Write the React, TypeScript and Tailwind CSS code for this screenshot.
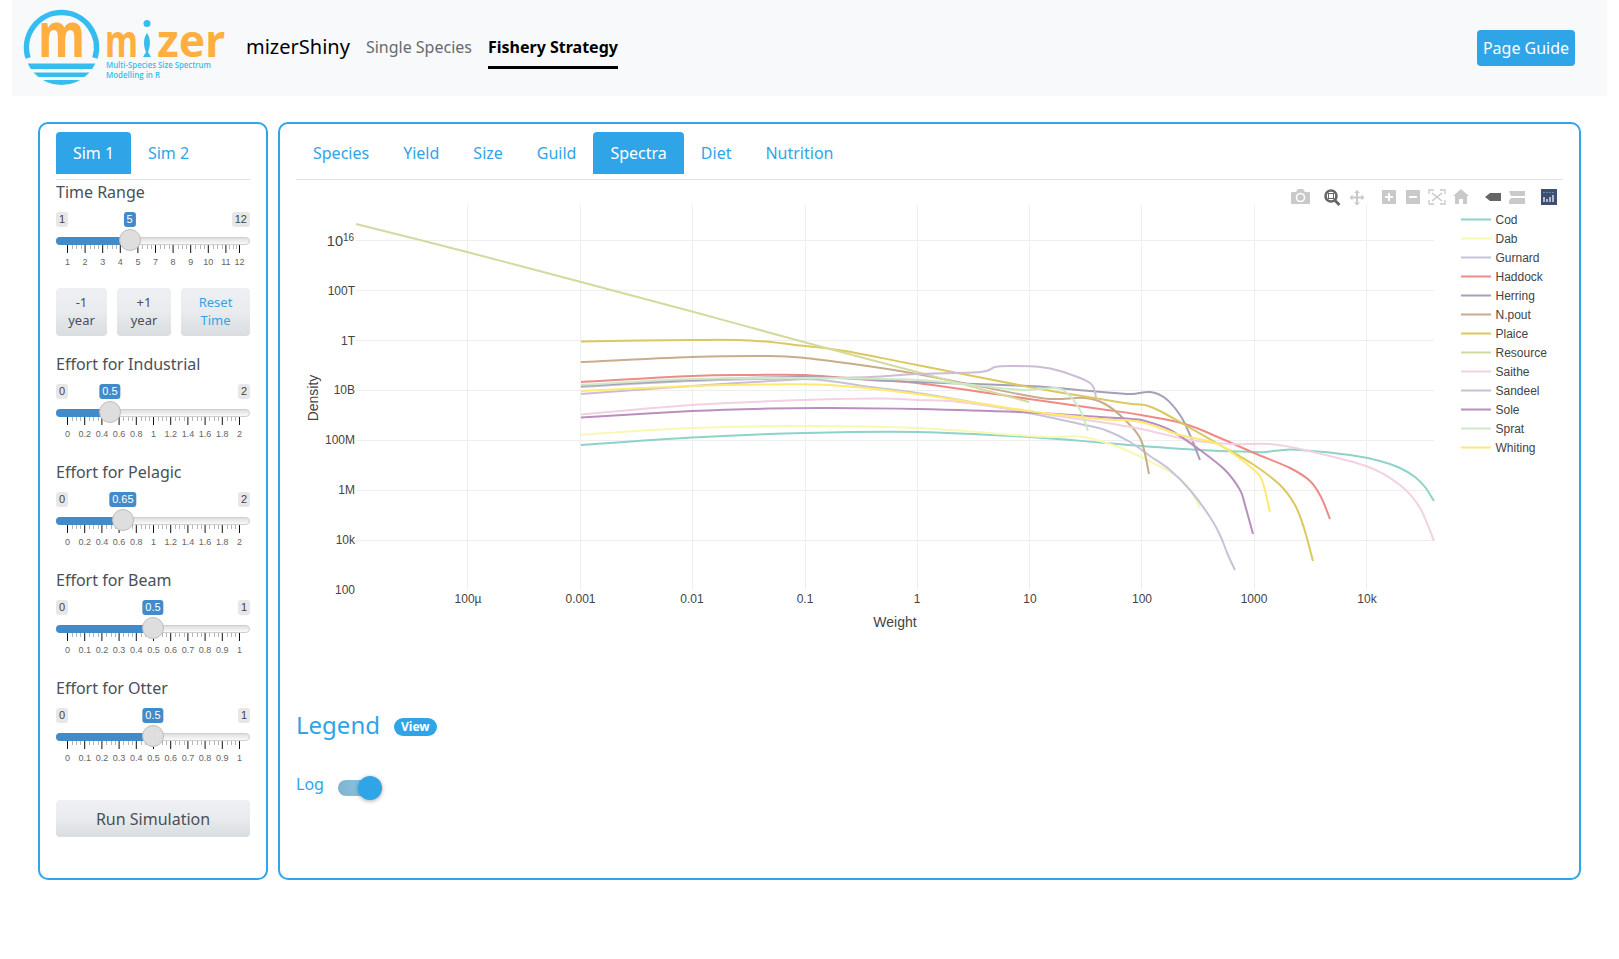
import React from "react";

type Point = [number, number];
type Series = { name: string; color: string; points: Point[] };

const series: Series[] = [
  { name: "Cod", color: "#8dd3c7", points: [[581,445],[692,437.5],[805,433],[917,432],[1029,437],[1100,442.5],[1141,446],[1200,450],[1254,452],[1265,452],[1283,450],[1300,450],[1350,455],[1380,461],[1400,468],[1415,477],[1425,487],[1434,501]] },
  { name: "Dab", color: "#f8f8b4", points: [[581,434.5],[692,428],[805,426],[917,428],[1029,436],[1060,437],[1080,436.5],[1110,444],[1141,457],[1175,475],[1190,490],[1200,508]] },
  { name: "Gurnard", color: "#c6c3d8", points: [[581,387],[692,381],[805,379],[870,387],[917,393],[960,400],[1029,413],[1080,424],[1105,430],[1130,442],[1150,456],[1170,470],[1190,490],[1210,517],[1220,535],[1228,555],[1235,570]] },
  { name: "Haddock", color: "#ee8b87", points: [[581,382],[692,376],[750,375],[805,375],[870,380],[917,383],[1029,399],[1100,409],[1141,415],[1185,424],[1220,438],[1254,453],[1290,468],[1310,481],[1321,497],[1330,519]] },
  { name: "Herring", color: "#a6a0b6", points: [[581,386],[692,380],[805,377],[917,382],[1029,386],[1090,391],[1115,393],[1132,394],[1150,392],[1165,398],[1180,415],[1190,435],[1200,460]] },
  { name: "N.pout", color: "#c8ad8c", points: [[581,362],[692,357],[770,356],[805,358],[860,365],[917,374],[1029,396],[1055,399],[1085,398],[1105,404],[1125,420],[1141,440],[1149,474]] },
  { name: "Plaice", color: "#dbc85f", points: [[581,341.5],[692,340],[750,340.5],[805,346],[845,351],[917,365],[1029,387],[1100,399],[1132,404],[1145,405],[1160,411],[1185,425],[1220,445],[1254,465],[1280,485],[1295,505],[1304,528],[1313,561]] },
  { name: "Resource", color: "#d2da9e", points: [[356,224],[467,252],[581,282],[692,311.5],[800,341],[917,372],[1029,402]] },
  { name: "Saithe", color: "#f3d0e2", points: [[581,414.5],[692,405],[805,400],[880,398.5],[917,400],[960,402],[1029,412],[1100,422],[1141,429],[1190,440],[1230,444],[1270,444],[1300,449],[1366,466],[1400,485],[1420,508],[1434,541]] },
  { name: "Sandeel", color: "#cdbcd5", points: [[581,394],[692,386],[805,379],[870,377],[917,374],[980,372],[995,367],[1010,366],[1040,367],[1060,371],[1090,383],[1096,397]] },
  { name: "Sole", color: "#b88fbf", points: [[581,417.5],[692,411],[770,408.5],[830,408],[917,409],[1029,412.5],[1100,417],[1132,419],[1145,421],[1170,430],[1200,450],[1225,470],[1240,490],[1245,505],[1253,534]] },
  { name: "Sprat", color: "#cdeac6", points: [[581,385],[692,379],[805,378],[917,380],[1000,388],[1029,390],[1055,388],[1067,393],[1080,410],[1088,431]] },
  { name: "Whiting", color: "#ffe96f", points: [[581,391],[692,386],[770,384.5],[830,385],[917,394],[1029,411],[1100,419],[1141,422],[1180,435],[1215,443],[1235,455],[1254,470],[1262,480],[1270,512]] },
];

// [grid x, label x, label]
const xTicks: [number, number, string][] = [
  [467, 468, "100µ"], [580, 580.5, "0.001"], [692, 692, "0.01"], [805, 805, "0.1"], [917, 917, "1"],
  [1029, 1030, "10"], [1141, 1142, "100"], [1254, 1254, "1000"], [1366, 1367, "10k"],
];
// [grid y, label baseline, label]
const yTicks: [number, number, string][] = [
  [290, 295, "100T"], [340, 345, "1T"], [390, 394, "10B"], [440, 444, "100M"],
  [490, 494, "1M"], [540, 544, "10k"], [590, 594, "100"],
];

// catmull-rom through the sampled points
function toPath(pts: Point[]) {
  let d = `M${pts[0][0]} ${pts[0][1]}`;
  for (let i = 0; i < pts.length - 1; i++) {
    const p0 = pts[Math.max(i - 1, 0)];
    const p1 = pts[i];
    const p2 = pts[i + 1];
    const p3 = pts[Math.min(i + 2, pts.length - 1)];
    const c1x = p1[0] + (p2[0] - p0[0]) / 6;
    const c1y = p1[1] + (p2[1] - p0[1]) / 6;
    const c2x = p2[0] - (p3[0] - p1[0]) / 6;
    const c2y = p2[1] - (p3[1] - p1[1]) / 6;
    d += ` C${c1x} ${c1y} ${c2x} ${c2y} ${p2[0]} ${p2[1]}`;
  }
  return d;
}

function Logo() {
  return (
    <svg width="228" height="96" viewBox="12 0 228 96" className="shrink-0">
      <defs>
        <clipPath id="logo-clip">
          <circle cx="61.5" cy="47.5" r="37.5" />
        </clipPath>
      </defs>
      <path d="M28.1 58 A35 35 0 1 1 94.9 58" fill="none" stroke="#36bdf0" strokeWidth="5.5" />
      <g clipPath="url(#logo-clip)" fill="#36bdf0">
        <rect x="20" y="63.5" width="84" height="5.5" />
        <rect x="20" y="72.5" width="84" height="4.5" />
        <rect x="20" y="80" width="84" height="6" />
      </g>
      <g fill="#ffaf40" fontFamily="'Noto Sans', sans-serif" fontWeight="700">
        <text x="38" y="57" fontSize="62" textLength="47" lengthAdjust="spacingAndGlyphs">m</text>
        <text x="105" y="57" fontSize="44" textLength="33" lengthAdjust="spacingAndGlyphs">m</text>
        <text x="157" y="57" fontSize="44" textLength="68" lengthAdjust="spacingAndGlyphs">zer</text>
      </g>
      <circle cx="147" cy="23.5" r="3.5" fill="#36bdf0" />
      <path d="M147 33C150.5 38 151 45 148 52L151 57H143L146 52C143 45 143.5 38 147 33Z" fill="#36bdf0" />
      <g fill="#36bdf0" fontFamily="'Open Sans', sans-serif" fontSize="8.5" fontWeight="600">
        <text x="106" y="67.5" textLength="105" lengthAdjust="spacingAndGlyphs">Multi-Species Size Spectrum</text>
        <text x="106" y="78" textLength="54" lengthAdjust="spacingAndGlyphs">Modelling in R</text>
      </g>
    </svg>
  );
}

function Slider({
  min,
  max,
  value,
  pct,
  ticks,
  step = 17.2,
}: {
  min: string;
  max: string;
  value: string;
  pct: number;
  ticks: string[];
  step?: number;
}) {
  const center = 11 + 172 * pct;
  return (
    <div className="relative h-[63px] w-[194px]">
      <div className="flex justify-between text-[11px] leading-[15px] font-['Liberation_Sans',sans-serif] text-[#444]">
        <span className="rounded-[3px] bg-[#e7e7e7] px-[3px]">{min}</span>
        <span className="rounded-[3px] bg-[#e7e7e7] px-[3px]">{max}</span>
      </div>
      <span
        className="absolute top-0 -translate-x-1/2 rounded-[3px] bg-[#428bca] px-[3px] text-[11px] leading-[15px] text-white font-['Liberation_Sans',sans-serif]"
        style={{ left: center }}
      >
        {value}
      </span>
      <div className="relative mt-[10px] h-2 rounded-full border border-[#cfcfcf] bg-linear-to-b from-[#dedede] to-[#fbfbfb]">
        <div
          className="absolute -top-px -left-px h-2 rounded-l-full bg-[#428bca]"
          style={{ width: center }}
        />
        <div
          className="absolute top-[-9px] h-[22px] w-[22px] -translate-x-1/2 rounded-full border border-[#bdbdbd] bg-[#dedede]"
          style={{ left: center - 1 }}
        />
      </div>
      <svg width="194" height="26" className="block font-['Liberation_Sans',sans-serif]">
        {ticks.map((t, i) => {
          const last = i === ticks.length - 1;
          const x = last ? 183.5 : 11.5 + i * step;
          const next = 11.5 + (i + 1) * step;
          const gap = (Math.min(next, 183.5) - x) / 4;
          return (
            <g key={i}>
              <line x1={x} x2={x} y1="0" y2="8" stroke="#111" />
              {!last &&
                [1, 2, 3].map((m) => (
                  <line key={m} x1={Math.round(x + m * gap) + 0.5} x2={Math.round(x + m * gap) + 0.5} y1="0" y2="4" stroke="#b5b5b5" />
                ))}
              <text x={x} y="20" textAnchor="middle" fontSize="9" fill="#666">
                {t}
              </text>
            </g>
          );
        })}
      </svg>
    </div>
  );
}

const grid2 = ["0", "0.2", "0.4", "0.6", "0.8", "1", "1.2", "1.4", "1.6", "1.8", "2"];
const grid1 = ["0", "0.1", "0.2", "0.3", "0.4", "0.5", "0.6", "0.7", "0.8", "0.9", "1"];
const gridTime = ["1", "2", "3", "4", "5", "7", "8", "9", "10", "11", "12"];

const efforts = [
  { label: "Effort for Industrial", min: "0", max: "2", value: "0.5", pct: 0.25, ticks: grid2 },
  { label: "Effort for Pelagic", min: "0", max: "2", value: "0.65", pct: 0.325, ticks: grid2 },
  { label: "Effort for Beam", min: "0", max: "1", value: "0.5", pct: 0.5, ticks: grid1 },
  { label: "Effort for Otter", min: "0", max: "1", value: "0.5", pct: 0.5, ticks: grid1 },
];

const btn =
  "flex items-center justify-center rounded-[4px] bg-linear-to-b from-[#eef0f3] via-[#e9ebee] to-[#d9dde0] text-[#495057]";

function Modebar() {
  const g = "#c9c9c9";
  return (
    <g>
      {/* camera */}
      <path d="M1292 192h4l2-3h5l2 3h4a1 1 0 0 1 1 1v10a1 1 0 0 1-1 1h-17a1 1 0 0 1-1-1v-10a1 1 0 0 1 1-1z" fill={g} />
      <circle cx="1300.5" cy="197.5" r="4" fill="none" stroke="#fff" strokeWidth="1.6" />
      {/* zoom */}
      <circle cx="1331" cy="196" r="5.5" fill="none" stroke="#666" strokeWidth="2.6" />
      <rect x="1328.5" y="193.5" width="5" height="5" fill="none" stroke="#666" strokeWidth="1" />
      <path d="M1335 200.5l4.500 4.500" stroke="#666" strokeWidth="2.8" />
      {/* pan */}
      <path d="M1357 190l3 3h-2v3.500h3.500v-2l3 3-3 3v-2H1358v4h2l-3 3-3-3h2v-4h-3.500v2l-3-3 3-3v2H1356V193h-2z" fill={g} />
      {/* zoom in / out */}
      <rect x="1382" y="190" width="14" height="14" fill={g} />
      <path d="M1389 193v8M1385 197h8" stroke="#fff" strokeWidth="2" />
      <rect x="1406" y="190" width="14" height="14" fill={g} />
      <path d="M1409 197h8" stroke="#fff" strokeWidth="2" />
      {/* autoscale */}
      <path d="M1429 194v-4h5M1440 190h5v4M1445 200v4h-5M1434 204h-5v-4" fill="none" stroke={g} strokeWidth="1.300" />
      <path d="M1432 193l10 8M1442 193l-10 8" stroke={g} strokeWidth="1.600" />
      {/* home */}
      <path d="M1461 189l8 7h-2v8h-4v-5h-4v5h-4v-8h-2z" fill={g} />
      {/* spike lines */}
      <path d="M1485 197l5-4h11v8h-11z" fill="#666" />
      <path d="M1509 191h16v5h-14zM1511 198h14v6h-16v-3z" fill={g} />
      {/* plotly */}
      <rect x="1541" y="189" width="16" height="16" fill="#3e4e74" />
      <g stroke="#fff" strokeWidth="1.200">
        <path d="M1544 197v5M1547 199v3M1550 197v5M1553 195v7" />
      </g>
      <g fill="#8fd3d5">
        <rect x="1543.500" y="192" width="1" height="1" />
        <rect x="1546.500" y="192" width="1" height="1" />
        <rect x="1549.500" y="192" width="1" height="1" />
        <rect x="1552.500" y="192" width="1" height="1" />
      </g>
    </g>
  );
}

function Chart() {
  return (
    <svg
      width="1270"
      height="460"
      viewBox="296 185 1270 460"
      className="block font-['Liberation_Sans',sans-serif]"
    >
      <Modebar />
      <g stroke="#eeeeee" strokeWidth="1">
        {xTicks.map(([x]) => (
          <line key={x} x1={x + 0.5} x2={x + 0.5} y1="205" y2="590" />
        ))}
        <line x1="356" x2="1434" y1="240.500" y2="240.500" />
        {yTicks.slice(0, 6).map(([y]) => (
          <line key={y} x1="356" x2="1434" y1={y + 0.5} y2={y + 0.5} />
        ))}
      </g>
      {series.map((s) => (
        <path key={s.name} d={toPath(s.points)} fill="none" stroke={s.color} strokeWidth="2" strokeLinejoin="round" />
      ))}
      <g fill="#444" fontSize="12">
        <text x="343" y="246" textAnchor="end" fontSize="14.500">10</text>
        <text x="343" y="241" fontSize="10">16</text>
        {yTicks.map(([y, by, t]) => (
          <text key={y} x="355" y={by} textAnchor="end">{t}</text>
        ))}
        {xTicks.map(([x, lx, t]) => (
          <text key={x} x={lx} y="603" textAnchor="middle">{t}</text>
        ))}
        <text x="895" y="627" textAnchor="middle" fontSize="14">Weight</text>
        <text transform="translate(318 398) rotate(-90)" textAnchor="middle" fontSize="14">Density</text>
        {series.map((s, i) => (
          <g key={s.name}>
            <line x1="1461" x2="1491" y1={219.5 + i * 19} y2={219.5 + i * 19} stroke={s.color} strokeWidth="2" />
            <text x="1495.500" y={224 + i * 19}>{s.name}</text>
          </g>
        ))}
      </g>
    </svg>
  );
}

export default function App() {
  const [tab] = React.useState("Spectra");
  const tabs = ["Species", "Yield", "Size", "Guild", "Spectra", "Diet", "Nutrition"];
  return (
    <div className="min-h-[959px] bg-white font-['Noto_Sans',sans-serif] text-base text-[#495057]">
      {/* navbar */}
      <nav className="mx-3 flex h-24 items-center bg-[#f8f9fa]">
        <Logo />
        <span className="mb-[2px] ml-[6px] text-xl text-black">mizerShiny</span>
        <a className="mb-[2px] ml-[16px] text-base text-[#666b70]">Single Species</a>
        <a className="ml-4 flex h-[42px] items-center border-b-[3px] border-black text-base font-bold text-black">
          Fishery Strategy
        </a>
        <button className="mr-[32px] ml-auto h-[36px] w-[98px] rounded-[4px] bg-[#2fa4e7] text-base text-white">
          Page Guide
        </button>
      </nav>

      <div className="flex gap-[10px] pt-[26px] pl-[38px]">
        {/* sidebar */}
        <aside className="h-[758px] w-[230px] rounded-[10px] border-2 border-[#2fa4e7] px-4 pt-2">
          <div className="flex h-[48px] border-b border-[#dee2e6]">
            <a className="flex h-[42px] w-[75px] items-center justify-center rounded-t-[4px] bg-[#2fa4e7] text-white">Sim 1</a>
            <a className="flex h-[42px] w-[75px] items-center justify-center text-[#2fa4e7]">Sim 2</a>
          </div>
          <div className="h-[24px] leading-[24px]">Time Range</div>
          <div className="mt-[8px]">
            <Slider min="1" max="12" value="5" pct={0.3636} ticks={gridTime} step={17.6} />
          </div>
          <div className="mt-[13px] flex gap-[10px] text-[13px] leading-[18px]">
            <button className={`${btn} h-[48px] w-[51px] pb-[2px]`}>-1<br />year</button>
            <button className={`${btn} h-[48px] w-[54px] pb-[2px]`}>+1<br />year</button>
            <button className={`${btn} h-[48px] w-[69px] pb-[2px] !text-[#2fa4e7]`}>Reset<br />Time</button>
          </div>
          <div className="mt-[16px] flex flex-col gap-[13px]">
            {efforts.map((e) => (
              <div key={e.label}>
                <div className="h-[24px] leading-[24px]">{e.label}</div>
                <div className="mt-[8px]">
                  <Slider min={e.min} max={e.max} value={e.value} pct={e.pct} ticks={e.ticks} />
                </div>
              </div>
            ))}
          </div>
          <button className={`${btn} mt-[29px] h-[37px] w-[194px] text-base`}>Run Simulation</button>
        </aside>

        {/* main panel */}
        <main className="h-[758px] w-[1303px] rounded-[10px] border-2 border-[#2fa4e7] px-4 pt-2">
          <div className="flex h-[48px] border-b border-[#dee2e6]">
            {tabs.map((t) => (
              <a
                key={t}
                className={
                  t === tab
                    ? "flex h-[42px] items-center rounded-t-[4px] bg-[#2fa4e7] px-[17px] text-white"
                    : "flex h-[42px] items-center px-[17px] text-[#2fa4e7]"
                }
              >
                {t}
              </a>
            ))}
          </div>
          <div className="mt-[5px]">
            <Chart />
          </div>
          <div className="mt-[64px] flex items-center gap-[14px]">
            <h2 className="text-2xl leading-[32px] text-[#2fa4e7]">Legend</h2>
            <span className="mt-[4px] flex h-[18px] items-center rounded-full bg-[#2fa4e7] px-[7px] text-xs font-bold text-white">View</span>
          </div>
          <div className="mt-[31px] flex items-center gap-[14px]">
            <span className="text-[#2fa4e7]">Log</span>
            <div className="relative mt-[8px] h-4 w-[38px] rounded-full bg-linear-to-r from-[#7fb2cf] to-[#8fcdf0]">
              <div className="absolute top-[-4px] right-[-6px] h-6 w-6 rounded-full bg-[#2fa4e7] shadow-[0_1px_4px_rgba(0,0,0,0.35)]" />
            </div>
          </div>
        </main>
      </div>
    </div>
  );
}
